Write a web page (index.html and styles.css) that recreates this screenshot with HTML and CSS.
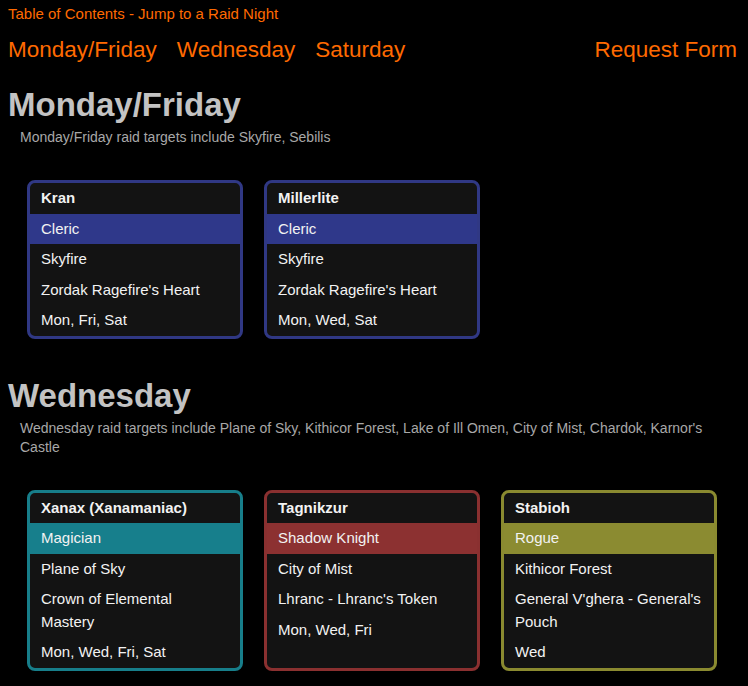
FILE: index.html
```html
<!DOCTYPE html>
<html>
<head>
<meta charset="utf-8">
<link rel="stylesheet" href="styles.css">
</head>
<body>
<div class="toc-title">Table of Contents - Jump to a Raid Night</div>
<nav class="toc-nav">
  <div class="toc-links">
    <a href="#monfri">Monday/Friday</a>
    <a href="#wed">Wednesday</a>
    <a href="#sat">Saturday</a>
  </div>
  <a href="#request">Request Form</a>
</nav>

<section class="night" id="monfri">
  <h1 class="night-title">Monday/Friday</h1>
  <p class="night-desc">Monday/Friday raid targets include Skyfire, Sebilis</p>
  <div class="cards">
    <div class="card card-cleric">
      <div class="row row-name">Kran</div>
      <div class="row row-class">Cleric</div>
      <div class="row">Skyfire</div>
      <div class="row">Zordak Ragefire's Heart</div>
      <div class="row">Mon, Fri, Sat</div>
    </div>
    <div class="card card-cleric">
      <div class="row row-name">Millerlite</div>
      <div class="row row-class">Cleric</div>
      <div class="row">Skyfire</div>
      <div class="row">Zordak Ragefire's Heart</div>
      <div class="row">Mon, Wed, Sat</div>
    </div>
  </div>
</section>

<section class="night" id="wed">
  <h1 class="night-title">Wednesday</h1>
  <p class="night-desc">Wednesday raid targets include Plane of Sky, Kithicor Forest, Lake of Ill Omen, City of Mist, Chardok, Karnor's Castle</p>
  <div class="cards">
    <div class="card card-mage">
      <div class="row row-name">Xanax (Xanamaniac)</div>
      <div class="row row-class">Magician</div>
      <div class="row">Plane of Sky</div>
      <div class="row">Crown of Elemental Mastery</div>
      <div class="row">Mon, Wed, Fri, Sat</div>
    </div>
    <div class="card card-sk">
      <div class="row row-name">Tagnikzur</div>
      <div class="row row-class">Shadow Knight</div>
      <div class="row">City of Mist</div>
      <div class="row">Lhranc - Lhranc's Token</div>
      <div class="row">Mon, Wed, Fri</div>
    </div>
    <div class="card card-rogue">
      <div class="row row-name">Stabioh</div>
      <div class="row row-class">Rogue</div>
      <div class="row">Kithicor Forest</div>
      <div class="row">General V'ghera - General's Pouch</div>
      <div class="row">Wed</div>
    </div>
  </div>
</section>
</body>
</html>
```

FILE: styles.css
```css
html, body {
  background: #000;
}
body {
  margin: 0;
  padding: 0 8px;
  font-family: "Liberation Sans", Arial, sans-serif;
  color: #f2f2f2;
}
a {
  color: #ff6a00;
  text-decoration: none;
}
.toc-title {
  color: #ff6a00;
  font-size: 15px;
  line-height: 17px;
  padding-top: 5px;
}
.toc-nav {
  display: flex;
  justify-content: space-between;
  margin-top: 15px;
  padding-right: 3px;
  font-size: 22.5px;
  line-height: 26px;
}
.toc-links {
  display: flex;
  gap: 20px;
}
.night-title {
  margin: 23px 0 0;
  font-size: 33px;
  line-height: 38px;
  font-weight: bold;
  color: #c3c3c3;
}
.night-desc {
  margin: 4px 0 0;
  padding-left: 12px;
  font-size: 14px;
  line-height: 19px;
  color: #a8a8a8;
  max-width: 700px;
}
.cards {
  display: grid;
  grid-template-columns: repeat(3, 216px);
  column-gap: 21px;
  margin: 33px 0 0 19px;
}
.night + .night {
  margin-top: 38px;
}
.card {
  border: 3px solid;
  border-radius: 8px;
  background: #131313;
  overflow: hidden;
}
.row {
  font-size: 15px;
  line-height: 22.5px;
  padding: 4px 12px 4px 11px;
}
.row-name {
  font-weight: bold;
}
.card-cleric { border-color: #303884; }
.card-cleric .row-class { background: #2f388a; }
.card-mage { border-color: #177e8a; }
.card-mage .row-class { background: #177f8c; }
.card-sk { border-color: #8a3030; }
.card-sk .row-class { background: #8c3131; }
.card-rogue { border-color: #8a8a30; }
.card-rogue .row-class { background: #8b8b31; }
```
